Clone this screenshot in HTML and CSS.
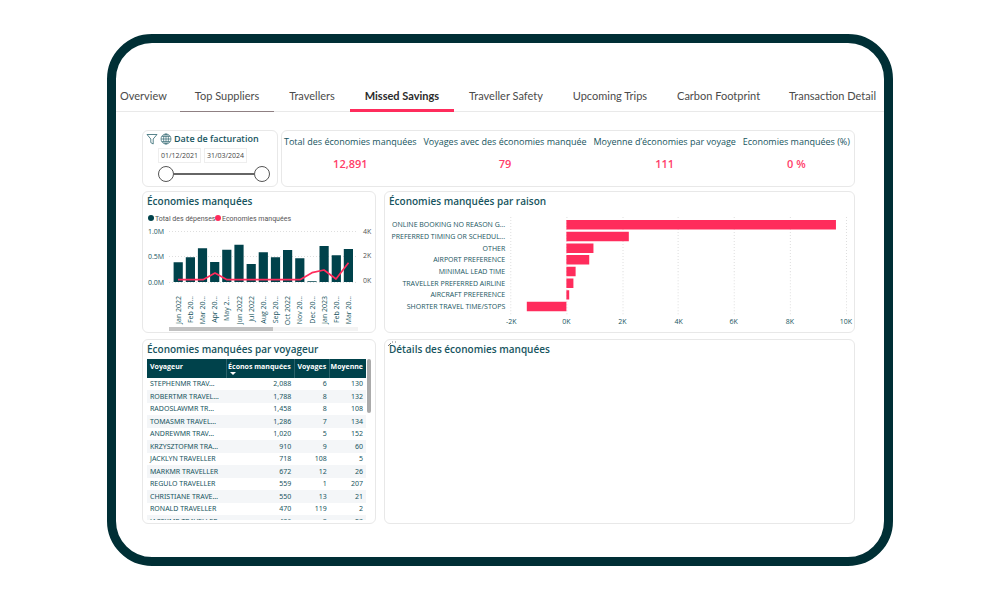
FILE: index.html
```html
<!DOCTYPE html>
<html lang="fr">
<head>
<meta charset="utf-8">
<title>Missed Savings</title>
<link rel="stylesheet" href="styles.css">
</head>
<body>
<div class="device">
  <nav class="tabs">
    <a class="tab" href="#">Overview</a>
    <a class="tab hovered" href="#">Top Suppliers</a>
    <a class="tab" href="#">Travellers</a>
    <a class="tab active" href="#" aria-current="page">Missed Savings</a>
    <a class="tab" href="#">Traveller Safety</a>
    <a class="tab" href="#">Upcoming Trips</a>
    <a class="tab" href="#">Carbon Footprint</a>
    <a class="tab" href="#">Transaction Detail</a>
  </nav>
  <main class="report">
    <div class="summary">
      <section class="card dates">
        <h2 class="date-title">
          <svg class="icon" viewBox="0 0 12 12"><path d="M1 1.5h10L7.2 6v5L4.8 9.6V6z"/></svg>
          <svg class="icon globe" viewBox="0 0 12 12"><circle cx="6" cy="6" r="5"/><ellipse cx="6" cy="6" rx="2.4" ry="5"/><path d="M6 1v10M1 6h10M1.8 3.4h8.4M1.8 8.6h8.4"/></svg>
          <span>Date de facturation</span>
        </h2>
        <div class="date-fields">
          <input class="date" type="text" value="01/12/2021" aria-label="Date de début">
          <input class="date" type="text" value="31/03/2024" aria-label="Date de fin">
        </div>
        <div class="slider">
          <input class="range" type="range" value="0" aria-label="Début">
          <input class="range" type="range" value="100" aria-label="Fin">
        </div>
      </section>
      <section class="card kpis">
        <div class="kpi"><h2 class="kpi-title">Total des économies manquées</h2><p class="kpi-value">12,891</p></div>
        <div class="kpi"><h2 class="kpi-title">Voyages avec des économies manquée</h2><p class="kpi-value">79</p></div>
        <div class="kpi"><h2 class="kpi-title">Moyenne d’économies par voyage</h2><p class="kpi-value">111</p></div>
        <div class="kpi"><h2 class="kpi-title">Economies manquées (%)</h2><p class="kpi-value">0 %</p></div>
      </section>
    </div>
    <div class="panels">
      <section class="card">
        <h2 class="title">Économies manquées</h2>
        <svg class="chart" viewBox="143 211 232 121">
          <circle cx="151" cy="218" r="3" class="spend"/><text x="155" y="221" class="legend">Total des dépenses</text>
          <circle cx="218" cy="218" r="3" class="saving"/><text x="222" y="221" class="legend">Economies manquées</text>
          <path class="grid" d="M169 231.500H358M169 256.500H358M169 282.500H358"/>
          <g class="axis"><text x="148" y="234">1.0M</text><text x="148" y="259">0.5M</text><text x="148" y="285">0.0M</text></g>
          <g class="axis grey"><text x="363" y="234">4K</text><text x="363" y="258">2K</text><text x="363" y="283">0K</text></g>
          <path class="spend" d="M173.600 262.300h9.200V282h-9.200zM185.800 257.300h9.200V282h-9.200zM197.900 248.300h9.200V282h-9.200zM210.100 262h9.200V282h-9.200zM222.200 249.700h9.200V282h-9.200zM234.400 244.700h9.200V282h-9.200zM246.600 264h9.200V282h-9.200zM258.700 252.300h9.200V282h-9.200zM270.900 257.300h9.200V282h-9.200zM283 250h9.200V282h-9.200zM295.200 258.300h9.200V282h-9.200zM307.400 281.200h9.200V282h-9.200zM319.500 246h9.200V282h-9.200zM331.700 255.300h9.200V282h-9.200zM343.800 249h9.200V282h-9.200z"/>
          <path class="trend" d="M178 279.700H203L215 273L227 279.700H300L312 272.700L324 270L336 279L348.500 262.700"/>
          <g class="axis months">
            <text transform="translate(181 296) rotate(-90)">Jan 2022</text>
            <text transform="translate(193 296) rotate(-90)">Feb 20…</text>
            <text transform="translate(205 296) rotate(-90)">Mar 20…</text>
            <text transform="translate(217 296) rotate(-90)">Apr 20…</text>
            <text transform="translate(229 296) rotate(-90)">May 2…</text>
            <text transform="translate(242 296) rotate(-90)">Jun 2022</text>
            <text transform="translate(254 296) rotate(-90)">Jul 2022</text>
            <text transform="translate(266 296) rotate(-90)">Aug 20…</text>
            <text transform="translate(278 296) rotate(-90)">Sep 20…</text>
            <text transform="translate(290 296) rotate(-90)">Oct 2022</text>
            <text transform="translate(302 296) rotate(-90)">Nov 20…</text>
            <text transform="translate(315 296) rotate(-90)">Dec 20…</text>
            <text transform="translate(327 296) rotate(-90)">Jan 2023</text>
            <text transform="translate(339 296) rotate(-90)">Feb 20…</text>
            <text transform="translate(351 296) rotate(-90)">Mar 20…</text>
          </g>
          <rect x="169" y="327" width="189" height="4" fill="#f3f3f3"/><rect x="169" y="327" width="104" height="4" fill="#c2c2c2"/>
        </svg>
      </section>
      <section class="card">
        <h2 class="title">Économies manquées par raison</h2>
        <svg class="chart" viewBox="385 211 468 121">
          <path class="grid" d="M510.500 217V316M566.500 217V316M622.500 217V316M677.500 217V316M733.500 217V316M789.500 217V316M845.500 217V316"/>
          <g class="axis reasons">
            <text x="505" y="227">ONLINE BOOKING NO REASON G…</text>
            <text x="505" y="239">PREFERRED TIMING OR SCHEDUL…</text>
            <text x="505" y="251">OTHER</text>
            <text x="505" y="262">AIRPORT PREFERENCE</text>
            <text x="505" y="274">MINIMAL LEAD TIME</text>
            <text x="505" y="286">TRAVELLER PREFERRED AIRLINE</text>
            <text x="505" y="297">AIRCRAFT PREFERENCE</text>
            <text x="505" y="309">SHORTER TRAVEL TIME/STOPS</text>
          </g>
          <path class="saving" d="M566 220h269v9.400H566zM566 231.800h62.300v9.400H566zM566 243.500h27v9.400H566zM566 255h22.800v9.400H566zM566 266.700h9.200v9.400H566zM566 278.400h7v9.400H566zM566 290h2.800v9.400H566zM526.500 301.600H566v9.400H526.500z"/>
          <g class="axis ticks"><text x="511" y="324">-2K</text><text x="566" y="324">0K</text><text x="622" y="324">2K</text><text x="678" y="324">4K</text><text x="733" y="324">6K</text><text x="789" y="324">8K</text><text x="845" y="324">10K</text></g>
        </svg>
      </section>
      <section class="card">
        <h2 class="title">Économies manquées par voyageur</h2>
        <div class="table-box">
          <table class="table">
            <thead><tr><th class="name">Voyageur</th><th class="sorted">Éconos manquées</th><th>Voyages</th><th>Moyenne</th></tr></thead>
            <tbody>
              <tr><td>STEPHENMR TRAV…</td><td>2,088</td><td>6</td><td>130</td></tr>
              <tr><td>ROBERTMR TRAVEL…</td><td>1,788</td><td>8</td><td>132</td></tr>
              <tr><td>RADOSLAWMR TR…</td><td>1,458</td><td>8</td><td>108</td></tr>
              <tr><td>TOMASMR TRAVEL…</td><td>1,286</td><td>7</td><td>134</td></tr>
              <tr><td>ANDREWMR TRAV…</td><td>1,020</td><td>5</td><td>152</td></tr>
              <tr><td>KRZYSZTOFMR TRA…</td><td>910</td><td>9</td><td>60</td></tr>
              <tr><td>JACKLYN TRAVELLER</td><td>718</td><td>108</td><td>5</td></tr>
              <tr><td>MARKMR TRAVELLER</td><td>672</td><td>12</td><td>26</td></tr>
              <tr><td>REGULO TRAVELLER</td><td>559</td><td>1</td><td>207</td></tr>
              <tr><td>CHRISTIANE TRAVE…</td><td>550</td><td>13</td><td>21</td></tr>
              <tr><td>RONALD TRAVELLER</td><td>470</td><td>119</td><td>2</td></tr>
              <tr><td>JACEKMR TRAVELLER</td><td>436</td><td>8</td><td>23</td></tr>
            </tbody>
          </table>
          <div class="scroll-thumb"></div>
        </div>
      </section>
      <section class="card details">
        <svg class="handle" viewBox="0 0 10 6"><path d="M1 5L4 2M5 1h1M8 1h1"/></svg>
        <h2 class="title">Détails des économies manquées</h2>
      </section>
    </div>
  </main>
</div>
</body>
</html>
```
FILE: styles.css
```css
* { box-sizing: border-box; }
body {
  margin: 0;
  padding: 34px 107px;
  background: #fff;
  color: #175560;
  font-family: "Open Sans", "Noto Sans", sans-serif;
}
h2, p { margin: 0; }
.device {
  min-height: calc(100vh - 68px);
  padding-top: 43px;
  border: 9px solid #002f35;
  border-radius: 45px;
  background: #fff;
}
.tabs {
  display: flex;
  height: 26px;
  border-bottom: 1px solid #e9e9e9;
}
.tab {
  flex: 1 1 auto;
  height: 26px;
  color: #4b4b4b;
  font: 11px/19px Lato, sans-serif;
  text-align: center;
  text-decoration: none;
  white-space: nowrap;
}
.tab:first-child { flex-grow: 0; padding-left: 4px; padding-right: 13px; }
.tab:last-child { flex-grow: 0; padding-left: 14px; padding-right: 8px; }
.hovered { border-bottom: 1px solid #8f8083; }
.active { border-bottom: 3px solid #ff2c5c; color: #2b2b2b; font-weight: 700; }
.report { padding: 18px 29px 30px 26px; }
.card {
  min-width: 0;
  border: 1px solid #e8e8e8;
  border-radius: 6px;
  background: #fff;
}
.summary {
  display: grid;
  grid-template-columns: 136fr 574fr;
  gap: 3px;
  margin-bottom: 4px;
}
.dates { padding: 1px 7px 4px 3px; }
.date-title {
  display: flex;
  align-items: center;
  gap: 2px;
  font-size: 9px;
  font-weight: 600;
  line-height: 14px;
  white-space: nowrap;
}
.icon { width: 12px; height: 12px; fill: none; stroke: #2f6670; stroke-width: 0.8; }
.globe { stroke-width: 0.7; }
.date-fields { display: flex; gap: 3px; margin: 2px 0 3px 12px; }
.date {
  width: 43px;
  height: 15px;
  padding: 0;
  border: 1px solid #eee;
  background: #fff;
  color: #444;
  font: 7px "Open Sans", sans-serif;
  text-align: center;
}
.slider {
  display: grid;
  margin-left: 12px;
  background: linear-gradient(#666, #666) center / 80px 2px no-repeat;
}
.range {
  grid-area: 1 / 1;
  width: 100%;
  height: 16px;
  margin: 0;
  background: none;
  appearance: none;
  pointer-events: none;
}
.range::-webkit-slider-thumb {
  width: 16px;
  height: 16px;
  border: 1px solid #555;
  border-radius: 50%;
  background: #fff;
  appearance: none;
  pointer-events: auto;
}
.kpis { display: flex; justify-content: space-between; padding: 3px 4px 0 2px; }
.kpi { text-align: center; white-space: nowrap; }
.kpi-title { font-size: 9px; font-weight: 500; line-height: 15px; }
.kpi-value { margin-top: 7px; color: #ff3d69; font-size: 11px; font-weight: 600; line-height: 16px; }
.panels {
  display: grid;
  grid-template-columns: 234fr 471fr;
  gap: 6px 8px;
}
.title { padding: 0 4px; font-size: 10px; font-weight: 600; line-height: 19px; white-space: nowrap; }
.chart { display: block; width: 100%; }
.spend { fill: #00424b; }
.saving { fill: #ff2c5c; }
.trend { fill: none; stroke: #ff2c5c; stroke-width: 1.7; stroke-linejoin: round; }
.grid { fill: none; stroke: #dedede; stroke-dasharray: 1 2; }
.legend { fill: #555; font-family: Roboto, sans-serif; font-size: 7px; }
.axis { fill: #175560; font-size: 7px; }
.grey { fill: #555; }
.months, .reasons { text-anchor: end; }
.ticks { text-anchor: middle; }
.table-box {
  display: flex;
  align-items: flex-start;
  gap: 1px;
  height: 161px;
  margin: 0 4px 3px;
  overflow: hidden;
}
.table {
  flex: 1;
  border-collapse: collapse;
  table-layout: fixed;
  font-family: "Noto Sans", sans-serif;
  font-size: 7px;
  line-height: 12px;
  text-align: right;
  white-space: nowrap;
}
.table th {
  width: 16%;
  height: 19px;
  padding: 0 3px 4px 0;
  border-left: 1px solid #2b626a;
  background: #00424b;
  color: #fff;
  font-family: "Open Sans", sans-serif;
  font-weight: 700;
}
.table .name { width: 36%; padding-left: 3px; border: 0; text-align: left; }
.table .sorted { position: relative; width: 30%; }
.sorted::after {
  position: absolute;
  left: 3px;
  bottom: 3px;
  border: 3px solid transparent;
  border-top-color: #fff;
  border-bottom: 0;
  content: "";
}
.table td { height: 12px; padding: 0 3px 0 0; }
.table td:first-child { padding-left: 3px; text-align: left; }
.table tr:nth-child(even) td { height: 13px; background: #f4f6f8; }
.scroll-thumb { width: 4px; height: 54px; border-radius: 2px; background: #aaa; }
.details { position: relative; }
.handle { position: absolute; left: 2px; top: 1px; width: 10px; height: 6px; fill: none; stroke: #777; }
```
